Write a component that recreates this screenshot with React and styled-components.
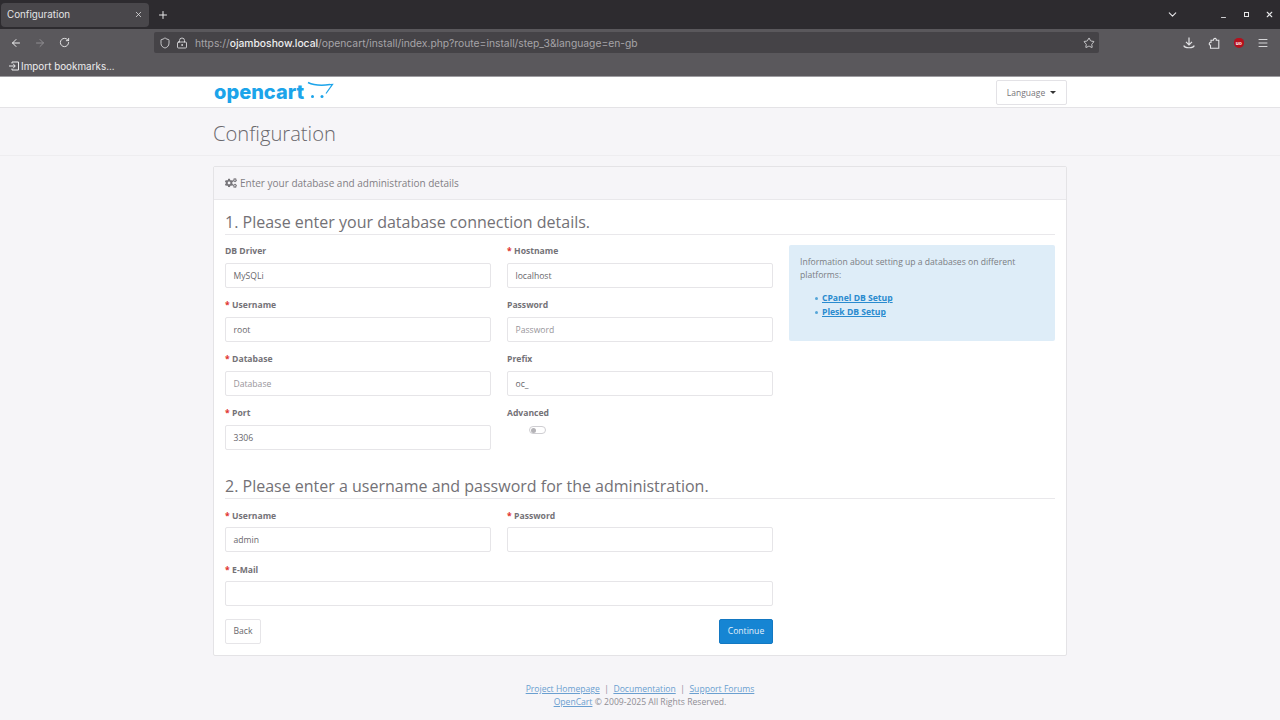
import React from 'react';
import styled, { createGlobalStyle } from 'styled-components';
import { ArrowLeft, ArrowRight, RotateCw, Shield, LockKeyhole, Star, Menu, ChevronDown, Plus, X, Minus } from 'lucide-react';
import { FaCogs } from 'react-icons/fa';

const Global = createGlobalStyle`
  html, body { margin: 0; padding: 0; width: 1280px; height: 720px; overflow: hidden; background: #f6f5f8; }
  * { box-sizing: border-box; }
  body { font-family: "Open Sans", "Liberation Sans", sans-serif; }
`;
const Page = styled.div`width:1280px;height:720px;display:flex;flex-direction:column;overflow:hidden;`;
const TabBar = styled.div`height:29px;background:#2d2b2f;display:flex;align-items:center;padding-left:1px;color:#e8e8ea;`;
const Tab = styled.div`width:148px;height:24px;background:#49474b;border-radius:4px;display:flex;align-items:center;justify-content:space-between;padding:0 6px 0 6px;font:9.8px Inter,"Liberation Sans",sans-serif;color:#e4e4e6;`;
const NewTab = styled.div`display:flex;margin-left:8px;`;
const Spacer = styled.div`flex:1;`;
const WinControls = styled.div`display:flex;align-items:center;color:#e6e6e8;margin-right:-1px;`;
const ListAll = styled.div`display:flex;margin-right:33px;`;
const WinBtn = styled.div`width:23px;height:14px;display:flex;align-items:center;justify-content:center;`;
const Restore = styled.span`width:5px;height:5px;border:1.5px solid #e6e6e8;display:block;`;
const Toolbar = styled.div`height:27px;background:#5a585c;display:flex;align-items:center;color:#e9e9eb;`;
const NavBtn = styled.div`width:24px;display:flex;justify-content:center;color:${p => p.$dim ? '#8f8d91' : '#ececee'};`;
const NavGroup = styled.div`display:flex;padding-left:4px;width:154px;`;
const UrlBar = styled.div`width:945px;height:21px;background:#454347;border-radius:2px;display:flex;align-items:center;padding:0 4px 0 5px;gap:5px;`;
const Url = styled.div`flex:1;margin-left:2px;font:10.3px Inter,"Liberation Sans",sans-serif;color:#a5a3a7;white-space:nowrap;b{font-weight:500;color:#eeeeef;}`;
const ToolIcons = styled.div`flex:1;display:flex;align-items:center;padding-left:78px;color:#e4e4e6;`;
const ToolIcon = styled.div`width:24.7px;display:flex;justify-content:center;`;
const Ublock = styled.div`width:10px;height:10px;border-radius:50% 50% 60% 60%;background:#b5101d;color:#fff;font:bold 5px "Liberation Sans",sans-serif;display:flex;align-items:center;justify-content:center;`;
const Bookmarks = styled.div`height:20px;background:#5a585c;display:flex;align-items:center;padding-left:9px;gap:2px;font:9.9px Inter,"Liberation Sans",sans-serif;color:#ececee;`;
const Divider = styled.div`height:1px;background:#9d9ca0;`;
const Header = styled.div`height:31px;background:#fff;border-bottom:1px solid #e4e3e6;display:flex;justify-content:center;`;
const HeaderInner = styled.div`width:854px;display:flex;align-items:center;justify-content:space-between;`;
const Logo = styled.div`display:flex;align-items:flex-start;color:#1ca4ea;font:800 20px/22px Inter,"Open Sans",sans-serif;letter-spacing:0;margin-left:1px;`;
const LangBtn = styled.div`width:71px;height:25px;background:#fff;border:1px solid #e3e2e6;border-radius:2px;display:flex;align-items:center;justify-content:center;gap:5px;font-size:8.5px;color:#77757a;margin-top:1px;`;
const Caret = styled.span`width:0;height:0;border-left:3.5px solid transparent;border-right:3.5px solid transparent;border-top:3.5px solid #333;`;
const TitleBand = styled.div`height:48px;border-bottom:1px solid #eeedf0;display:flex;justify-content:center;align-items:center;padding-top:3px;`;
const Title = styled.h1`width:854px;margin:0;font-weight:300;font-size:20.2px;color:#6a686d;`;
const Main = styled.div`display:flex;justify-content:center;padding-top:10px;`;
const Card = styled.div`width:854px;height:490px;background:#fff;border:1px solid #e4e3e6;border-radius:2px;display:flex;flex-direction:column;`;
const CardHead = styled.div`height:33px;background:#f6f5f8;border-bottom:1px solid #e9e8eb;display:flex;align-items:center;gap:3px;padding:0 11px;font-size:10px;color:#827f85;`;
const CardBody = styled.div`padding:12px 11px 0;display:flex;flex-direction:column;flex:1;`;
const Legend = styled.h2`margin:0;height:23px;font-weight:400;font-size:16px;line-height:20px;color:#737176;border-bottom:1px solid #e9e8eb;`;
const TopRow = styled.div`display:flex;gap:16px;margin-top:10px;`;
const Grid = styled.div`width:548px;flex:none;display:grid;grid-template-columns:266px 266px;column-gap:16px;`;
const Field = styled.div`height:54px;display:flex;flex-direction:column;grid-column:${p => p.$wide ? '1 / span 2' : 'auto'};`;
const Label = styled.label`height:18px;font-weight:700;font-size:8.6px;line-height:12px;color:#747277;`;
const Req = styled.span`color:#e03131;margin-right:2.4px;`;
const Input = styled.div`height:25px;border:1px solid #e6e5e8;border-radius:2px;background:#fff;display:flex;align-items:center;padding-left:7.5px;font-size:8.6px;color:${p => p.$ph ? '#97959a' : '#69676c'};`;
const Toggle = styled.div`width:17px;height:8px;border:1px solid #cfced2;border-radius:4px;margin:1px 0 0 22px;display:flex;align-items:center;padding-left:1px;`;
const Knob = styled.span`width:5px;height:5px;border-radius:50%;background:#b4b3b7;`;
const Info = styled.div`width:266px;height:96px;background:#deedf8;border-radius:2px;padding:11px;font-size:8.6px;line-height:13.4px;color:#7a7d83;`;
const InfoText = styled.div`margin-bottom:9px;`;
const LinkList = styled.ul`margin:0;padding:0 0 0 22px;list-style:none;`;
const LinkItem = styled.li`position:relative;height:14px;&::before{content:"";position:absolute;left:-7px;top:5px;width:3px;height:3px;border-radius:50%;background:#55a6d8;}`;
const InfoLink = styled.a`font-weight:700;color:#2a8bcf;text-decoration:underline;`;
const Section2 = styled(Legend)`margin-top:15px;`;
const AdminGrid = styled(Grid)`margin-top:11px;${Label}{height:17px;}`;
const Actions = styled.div`width:548px;display:flex;justify-content:space-between;margin-top:0.5px;`;
const Back = styled.div`width:36px;height:25px;border:1px solid #e6e5e8;border-radius:2px;display:flex;align-items:center;justify-content:center;font-size:8.6px;color:#69676c;`;
const Continue = styled.div`width:54px;height:25px;background:#1685d3;border:1px solid #1378c2;border-radius:2px;display:flex;align-items:center;justify-content:center;font-size:8.6px;color:#e4f1fa;`;
const Footer = styled.div`text-align:center;margin-top:27px;font-size:8.6px;line-height:13px;color:#8f8d94;`;
const FootLink = styled.a`color:#6a9fd0;text-decoration:underline;`;

const F = ({ label, req, value, ph, wide }) => (
  <Field $wide={wide}>
    <Label>{req && <Req>*</Req>}{label}</Label>
    <Input $ph={ph}>{value || ph}</Input>
  </Field>
);

export default function App() {
  return (
    <Page>
      <Global />
      <TabBar>
        <Tab>Configuration<X size={9} strokeWidth={2} /></Tab>
        <NewTab><Plus size={12} strokeWidth={2} /></NewTab>
        <Spacer />
        <WinControls>
          <ListAll><ChevronDown size={13} /></ListAll>
          <WinBtn><Minus size={7} strokeWidth={3} style={{ marginTop: 5 }} /></WinBtn>
          <WinBtn><Restore /></WinBtn>
          <WinBtn><X size={9} strokeWidth={3} /></WinBtn>
        </WinControls>
      </TabBar>
      <Toolbar>
        <NavGroup>
          <NavBtn><ArrowLeft size={12} strokeWidth={2} /></NavBtn>
          <NavBtn $dim><ArrowRight size={12} strokeWidth={2} /></NavBtn>
          <NavBtn><RotateCw size={11} strokeWidth={2} /></NavBtn>
        </NavGroup>
        <UrlBar>
          <Shield size={12} strokeWidth={1.6} />
          <LockKeyhole size={12} strokeWidth={1.6} />
          <Url>https://<b>ojamboshow.local</b>/opencart/install/index.php?route=install/step_3&amp;language=en-gb</Url>
          <Star size={12} strokeWidth={1.6} />
        </UrlBar>
        <ToolIcons>
          <ToolIcon>
            <svg width="12" height="12" viewBox="0 0 12 12" fill="none" stroke="currentColor" strokeWidth="1.200">
              <path d="M6 0.500V7.500M3 4.800L6 7.800L9 4.800" />
              <path d="M0.800 8.500C1.500 11.500 10.500 11.500 11.200 8.500" />
            </svg>
          </ToolIcon>
          <ToolIcon>
            <svg width="12" height="12" viewBox="0 0 12 12" fill="none" stroke="currentColor" strokeWidth="1.100">
              <path d="M2.500 11.200H10.800V3.200H8.300C8.800 1.200 5.700 0.400 5.400 3.200H3V5.300C1 5 0.500 8 2.500 8.200Z" />
            </svg>
          </ToolIcon>
          <ToolIcon><Ublock>uo</Ublock></ToolIcon>
          <ToolIcon><Menu size={12} strokeWidth={1.8} /></ToolIcon>
        </ToolIcons>
      </Toolbar>
      <Bookmarks>
        <svg width="10" height="10" viewBox="0 0 10 10" fill="none" stroke="#ececee" strokeWidth="1">
          <path d="M3 2.500V1h6.500v8H3V7.500" />
          <path d="M0 5h6M4.200 3L6.300 5L4.200 7" />
        </svg>
        Import bookmarks...
      </Bookmarks>
      <Divider />
      <Header>
        <HeaderInner>
          <Logo>opencart
            <svg width="27" height="22" viewBox="0 0 27 22" style={{ marginLeft: 3 }}>
              <path d="M1 1.500C7 4.500 14 4.800 23 3.600" fill="none" stroke="#1ca4ea" strokeWidth="1.500" />
              <path d="M23 3.600L25.500 3.400L19 12.500" fill="none" stroke="#1ca4ea" strokeWidth="1.200" />
              <circle cx="5.500" cy="15.500" r="1.500" fill="#1ca4ea" />
              <circle cx="15" cy="15.500" r="1.500" fill="#1ca4ea" />
            </svg>
          </Logo>
          <LangBtn>Language<Caret /></LangBtn>
        </HeaderInner>
      </Header>
      <TitleBand><Title>Configuration</Title></TitleBand>
      <Main>
        <Card>
          <CardHead>
            <FaCogs size={12} color="#77757a" />
            Enter your database and administration details
          </CardHead>
          <CardBody>
            <Legend>1. Please enter your database connection details.</Legend>
            <TopRow>
              <Grid>
                <F label="DB Driver" value="MySQLi" />
                <F req label="Hostname" value="localhost" />
                <F req label="Username" value="root" />
                <F label="Password" ph="Password" />
                <F req label="Database" ph="Database" />
                <F label="Prefix" value="oc_" />
                <F req label="Port" value="3306" />
                <Field>
                  <Label>Advanced</Label>
                  <Toggle><Knob /></Toggle>
                </Field>
              </Grid>
              <Info>
                <InfoText>Information about setting up a databases on different platforms:</InfoText>
                <LinkList>
                  <LinkItem><InfoLink>CPanel DB Setup</InfoLink></LinkItem>
                  <LinkItem><InfoLink>Plesk DB Setup</InfoLink></LinkItem>
                </LinkList>
              </Info>
            </TopRow>
            <Section2>2. Please enter a username and password for the administration.</Section2>
            <AdminGrid>
              <F req label="Username" value="admin" />
              <F req label="Password" value=" " />
              <F wide req label="E-Mail" value=" " />
            </AdminGrid>
            <Actions>
              <Back>Back</Back>
              <Continue>Continue</Continue>
            </Actions>
          </CardBody>
        </Card>
      </Main>
      <Footer>
        <div><FootLink>Project Homepage</FootLink> &nbsp;|&nbsp; <FootLink>Documentation</FootLink> &nbsp;|&nbsp; <FootLink>Support Forums</FootLink></div>
        <div><FootLink>OpenCart</FootLink> © 2009-2025 All Rights Reserved.</div>
      </Footer>
    </Page>
  );
}
